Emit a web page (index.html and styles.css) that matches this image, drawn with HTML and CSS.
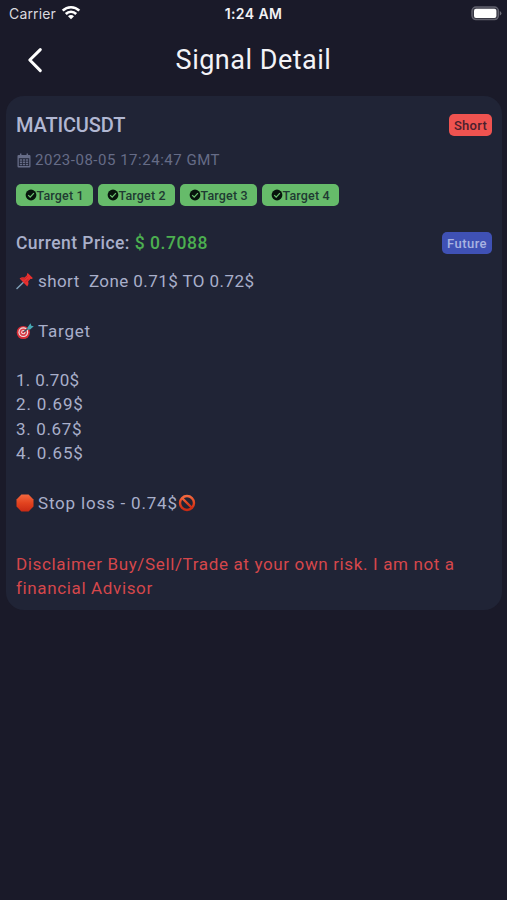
FILE: index.html
```html
<!DOCTYPE html>
<html lang="en">
<head>
<meta charset="utf-8">
<title>Signal Detail</title>
<link rel="stylesheet" href="styles.css">
</head>
<body>
<svg class="defs" width="0" height="0" aria-hidden="true">
  <linearGradient id="red" x1="0" y1="0" x2="0" y2="1"><stop offset="0" stop-color="#f2683f"/><stop offset=".5" stop-color="#e2431f"/><stop offset="1" stop-color="#c92a14"/></linearGradient>
  <symbol id="check" viewBox="0 0 12 12"><circle cx="6" cy="6" r="5.4" fill="#07140c"/><path d="M3.2 6.1l2 2 3.7-4" fill="none" stroke="#6abf6e" stroke-width="1.3"/></symbol>
</svg>
<div class="status">
  <div class="carrier"><span class="carrier-name">Carrier</span>
    <svg class="wifi" viewBox="0 0 20 15"><g fill="none" stroke="#fff" stroke-width="2.6"><path d="M1.7 5.6a11.8 11.8 0 0 1 16.6 0"/><path d="M4.8 9a7.3 7.3 0 0 1 10.4 0"/></g><path d="M10 14.2l-3-3a4.2 4.2 0 0 1 6 0z" fill="#fff"/></svg>
  </div>
  <span class="time">1:24 AM</span>
  <svg class="battery" viewBox="0 0 31 15"><rect x="1" y="1" width="26.4" height="12.600" rx="4" fill="#383844" stroke="#62626e" stroke-width="1.400"/><rect x="3" y="2.800" width="22.400" height="9.200" rx="2" fill="#fff"/><path d="M28.8 5v4.6q1.6-.7 1.6-2.3T28.800 5z" fill="#6c6c77"/></svg>
</div>
<header class="header">
  <svg class="back" viewBox="0 0 16 26"><path d="M13.3 2.6L2.800 13l10.500 10.600" fill="none" stroke="#fff" stroke-width="3" stroke-linecap="round" stroke-linejoin="round"/></svg>
  <h1 class="title">Signal Detail</h1>
</header>
<main class="card">
  <div class="row pair-row"><h2 class="pair">MATICUSDT</h2><span class="badge short">Short</span></div>
  <div class="date-row">
    <svg class="calendar" viewBox="0 0 14 15"><path d="M3.700.5v3M10.300.5v3" stroke="#666c87" stroke-width="1.500"/><path fill="#666c87" fill-rule="evenodd" d="M1.600 2h10.800q1.100 0 1.100 1.100v10.300q0 1.100-1.100 1.100H1.600Q.5 14.500.5 13.400V3.100Q.5 2 1.600 2zM1.800 5.200v7.900h10.400V5.200z"/><path d="M2.800 7h8.400M2.800 9.200h8.400M2.800 11.400h8.400" stroke="#666c87" stroke-width="1.500" stroke-dasharray="2.300 .750"/></svg>
    <span class="date">2023-08-05 17:24:47 GMT</span>
  </div>
  <div class="targets">
    <span class="target"><svg class="check"><use href="#check"/></svg>Target 1</span>
    <span class="target"><svg class="check"><use href="#check"/></svg>Target 2</span>
    <span class="target"><svg class="check"><use href="#check"/></svg>Target 3</span>
    <span class="target"><svg class="check"><use href="#check"/></svg>Target 4</span>
  </div>
  <div class="row price-row"><div class="price">Current Price: <span class="amount">$ 0.7088</span></div><span class="badge future">Future</span></div>
  <div class="line zone">
    <svg class="emoji" viewBox="0 0 18 18"><path d="M1 16.500l7-6.800" stroke="#7d9db5" stroke-width="1.500" stroke-linecap="round"/><path d="M3.600 6.400q2.500-1.800 5-.8l2.500-2.500q-.6-1.300.6-2.100l5.100 5q-.8 1.400-2.100.8l-2.500 2.400q1 2.600-.9 5.200z" fill="#e8312f"/><path d="M5 7q2-.6 3.600.2l3-3M9 10.400l3.700-3.700" fill="none" stroke="#b9232b" stroke-width=".8"/></svg>
    <span>short&nbsp; Zone 0.71$ TO 0.72$</span>
  </div>
  <div class="line goal">
    <svg class="emoji" viewBox="0 0 18 18"><circle cx="7.300" cy="10.500" r="6.600" fill="#d92e38"/><circle cx="7.300" cy="10.200" r="4.900" fill="#eedfe2"/><circle cx="7.300" cy="10.200" r="3.700" fill="#da3d46"/><circle cx="7.300" cy="10.200" r="2.100" fill="#f0dde0"/><circle cx="7.300" cy="10.200" r="1.100" fill="#cc2935"/><path d="M8 9.700l6.200-5.200" stroke="#31535e" stroke-width="1.500"/><path d="M11.500 5.500l3-4.200.8 2.500 2.500.5-3.700 3.100-2.800.2z" fill="#46a8b4"/></svg>
    <span>Target</span>
  </div>
  <ol class="levels"><li class="l1">1. 0.70$</li><li>2. 0.69$</li><li class="l3">3. 0.67$</li><li>4. 0.65$</li></ol>
  <div class="line stop">
    <svg class="emoji" viewBox="0 0 18 18"><path d="M5.400.6h7.200l4.900 4.900v7l-4.900 4.900H5.400L.5 12.500v-7z" fill="url(#red)"/></svg>
    <span>Stop loss - 0.74$</span>
    <svg class="ban" viewBox="0 0 18 18"><g fill="none" stroke="url(#red)" stroke-width="2.400"><circle cx="9" cy="9" r="7"/><path d="M4 4l10 10"/></g></svg>
  </div>
  <p class="disclaimer"><span class="d1">Disclaimer Buy/Sell/Trade at your own risk. I am not a</span><br><span class="d2">financial Advisor</span></p>
</main>
</body>
</html>
```
FILE: styles.css
```css
* { box-sizing: border-box; }
body { margin: 0; height: 900px; overflow: hidden; background: #1a1a29; color: #a9afca; font-family: Roboto, sans-serif; }
svg { display: block; flex: none; }
.defs { position: absolute; }
h1, h2, p, ol { margin: 0; padding: 0; font-weight: 400; }
.status { height: 28px; padding: 0 5px 0 9px; display: grid; grid-template-columns: 1fr auto 1fr; align-items: center; color: #f2f2f5; }
.carrier { display: flex; align-items: center; gap: 5px; font: 14px/28px Inter, sans-serif; color: #d9d9df; }
.carrier-name { letter-spacing: .15px; }
.wifi { width: 20px; height: 15px; margin-top: -3px; }
.time { font: 600 14px/28px Inter, sans-serif; letter-spacing: .4px; margin-right: 4px; }
.battery { width: 31px; height: 15px; justify-self: end; margin-top: -1px; }
.header { height: 68px; display: grid; grid-template-columns: 80px 1fr 80px; align-items: center; }
.back { width: 16px; height: 26px; margin: -5px 0 0 27px; }
.title { text-align: center; font-size: 27px; line-height: 32px; letter-spacing: .5px; color: #f3f3f7; margin-top: -4px; }
.card { margin: 0 5px 0 6px; height: 514px; padding: 17px 10px 0; border-radius: 18px; background: #202436; }
.row { display: flex; justify-content: space-between; align-items: center; }
.row, .line, .date-row, .targets { white-space: nowrap; }
.pair-row { height: 24px; }
.pair { font-size: 20px; line-height: 24px; font-weight: 500; letter-spacing: -.15px; color: #b1b7d2; }
.badge { height: 22px; border-radius: 5px; text-align: center; font-size: 13px; line-height: 23px; font-weight: 500; letter-spacing: .3px; }
.short { width: 43px; background: #ef5350; color: #4a202d; }
.future { width: 50px; background: #3f51b5; color: #a9b3e1; letter-spacing: .45px; }
.date-row { height: 20px; margin-top: 13px; display: flex; align-items: center; gap: 4px; padding-left: 1px; font-size: 15px; letter-spacing: .52px; color: #666c87; }
.calendar { width: 14px; height: 15px; }
.targets { display: flex; gap: 5px; margin: 14px 0 0 -.5px; }
.target { display: flex; align-items: center; width: 77px; height: 22px; padding: 1px 0 0 9px; border-radius: 5px; background: #66bb6a; color: #203a32; font-size: 12.5px; font-weight: 500; letter-spacing: .15px; }
.check { width: 12px; height: 12px; margin-top: -1px; }
.price-row { height: 24px; margin-top: 25px; }
.price { font-size: 17.5px; font-weight: 500; letter-spacing: .45px; }
.amount { color: #4caf50; letter-spacing: .55px; }
.line { display: flex; align-items: center; height: 24px; font-size: 17px; letter-spacing: .42px; }
.emoji { width: 18px; height: 18px; margin-right: 4px; }
.zone { margin-top: 14px; }
.goal { margin-top: 26px; letter-spacing: .8px; }
.levels { list-style: none; margin-top: 24.5px; font-size: 17px; line-height: 24.5px; letter-spacing: .85px; }
.l1 { letter-spacing: .3px; }
.l3 { letter-spacing: .65px; }
.stop { margin-top: 25.5px; letter-spacing: .8px; }
.ban { width: 18px; height: 18px; }
.disclaimer { margin-top: 36.5px; font-size: 17px; line-height: 24.5px; color: #d5474b; white-space: nowrap; letter-spacing: .64px; }
```
